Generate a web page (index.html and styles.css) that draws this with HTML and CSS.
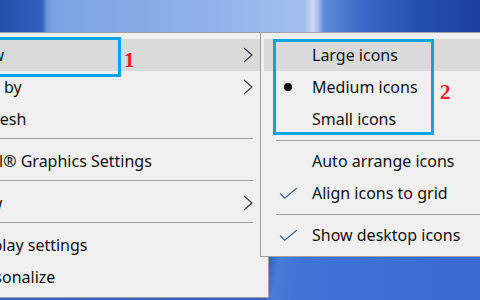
FILE: index.html
```html
<!DOCTYPE html>
<html lang="en">
<head>
    <meta charset="UTF-8">
    <meta name="viewport" content="width=device-width, initial-scale=1.0">
    <title>Desktop context menu - View</title>
    <link rel="stylesheet" href="styles.css">
</head>
<body>
    <div class="desktop">
        <!-- main context menu -->
        <ul class="menu main-menu">
            <li class="item active">View <svg class="arrow" viewBox="0 0 10 16"><polyline points="1,1 9,8 1,15"/></svg></li>
            <li class="item">Sort by <svg class="arrow" viewBox="0 0 10 16"><polyline points="1,1 9,8 1,15"/></svg></li>
            <li class="item">Refresh</li>
            <li class="sep"></li>
            <li class="item">Intel® Graphics Settings</li>
            <li class="sep"></li>
            <li class="item">New <svg class="arrow" viewBox="0 0 10 16"><polyline points="1,1 9,8 1,15"/></svg></li>
            <li class="sep"></li>
            <li class="item">Display settings</li>
            <li class="item">Personalize</li>
        </ul>

        <!-- View submenu -->
        <ul class="menu sub-menu">
            <li class="item active"><span class="mark"></span>Large icons</li>
            <li class="item"><span class="mark"><span class="dot"></span></span>Medium icons</li>
            <li class="item"><span class="mark"></span>Small icons</li>
            <li class="sep"></li>
            <li class="item"><span class="mark"></span>Auto arrange icons</li>
            <li class="item"><span class="mark"><svg class="check" viewBox="0 0 20 14"><polyline points="1,7 6,12 19,1"/></svg></span>Align icons to grid</li>
            <li class="sep"></li>
            <li class="item"><span class="mark"><svg class="check" viewBox="0 0 20 14"><polyline points="1,7 6,12 19,1"/></svg></span>Show desktop icons</li>
        </ul>

        <!-- annotation boxes -->
        <div class="callout callout-1"></div>
        <span class="num num-1">1</span>
        <div class="callout callout-2"></div>
        <span class="num num-2">2</span>
    </div>
</body>
</html>
```

FILE: styles.css
```css
html, body {
    margin: 0;
    padding: 0;
}
body {
    width: 480px;
    height: 300px;
    overflow: hidden;
    font-family: "Noto Sans", "Open Sans", sans-serif;
}
.desktop {
    position: relative;
    width: 480px;
    height: 300px;
    background:
        linear-gradient(90deg, #2550a8 0px, #3260bc 42px, #6e96dc 47px, #7ca2e3 52px, #8fb0ea 200px, #a4bfee 305px, #cfdcf5 313px, #a6c0ee 318px, #5f8ad9 324px, #3c6ac8 360px, #2450b0 420px, #1c3f9e 480px) top / 100% 32px no-repeat,
        linear-gradient(100deg, #3461c2 0px, #3562c4 310px, #4a7bd9 320px, #4274d6 340px, #3b6bd0 480px);
}
.menu {
    position: absolute;
    top: 32px;
    margin: 0;
    list-style: none;
    background-color: #f0f0f0;
    border: 1px solid #a0a0a0;
    box-sizing: border-box;
    font-size: 16px;
    color: #111;
}
.main-menu {
    left: -60px;
    width: 329px;
    padding: 6px 2px 4px 2px;
}
.sub-menu {
    left: 260px;
    width: 240px;
    padding: 6px 3px 5px 3px;
    z-index: 2;
}
.item {
    display: flex;
    align-items: center;
    height: 32px;
    white-space: nowrap;
}
.main-menu .item {
    padding-left: 26px;
    padding-right: 13px;
}
.item.active {
    background-color: #dadada;
}
.arrow {
    width: 10px;
    height: 16px;
    margin-left: auto;
    fill: none;
    stroke: #3a3a48;
    stroke-width: 1.2;
}
.main-menu .sep {
    height: 0;
    border-top: 1px solid #a0a0a0;
    margin: 3px 13px 6px 0;
}
.sub-menu .sep {
    height: 0;
    border-top: 1px solid #a0a0a0;
    margin: 5px 0 4px 12px;
}
.mark {
    display: flex;
    align-items: center;
    justify-content: center;
    width: 48px;
    height: 32px;
    flex: none;
}
.dot {
    width: 8px;
    height: 8px;
    border-radius: 50%;
    background-color: #111;
}
.check {
    width: 19px;
    height: 13px;
    fill: none;
    stroke: #44618a;
    stroke-width: 1.3;
}
.callout {
    position: absolute;
    border: 3px solid #0aa4e6;
    z-index: 3;
}
.callout-1 {
    left: -10px;
    top: 37px;
    width: 125px;
    height: 34px;
}
.callout-2 {
    left: 273px;
    top: 39px;
    width: 155px;
    height: 90px;
}
.num {
    position: absolute;
    z-index: 3;
    font-family: "Liberation Serif", serif;
    font-weight: bold;
    font-size: 21px;
    line-height: 1;
    color: #ef1b26;
}
.num-1 {
    left: 124px;
    top: 50px;
}
.num-2 {
    left: 440px;
    top: 82px;
}
```
